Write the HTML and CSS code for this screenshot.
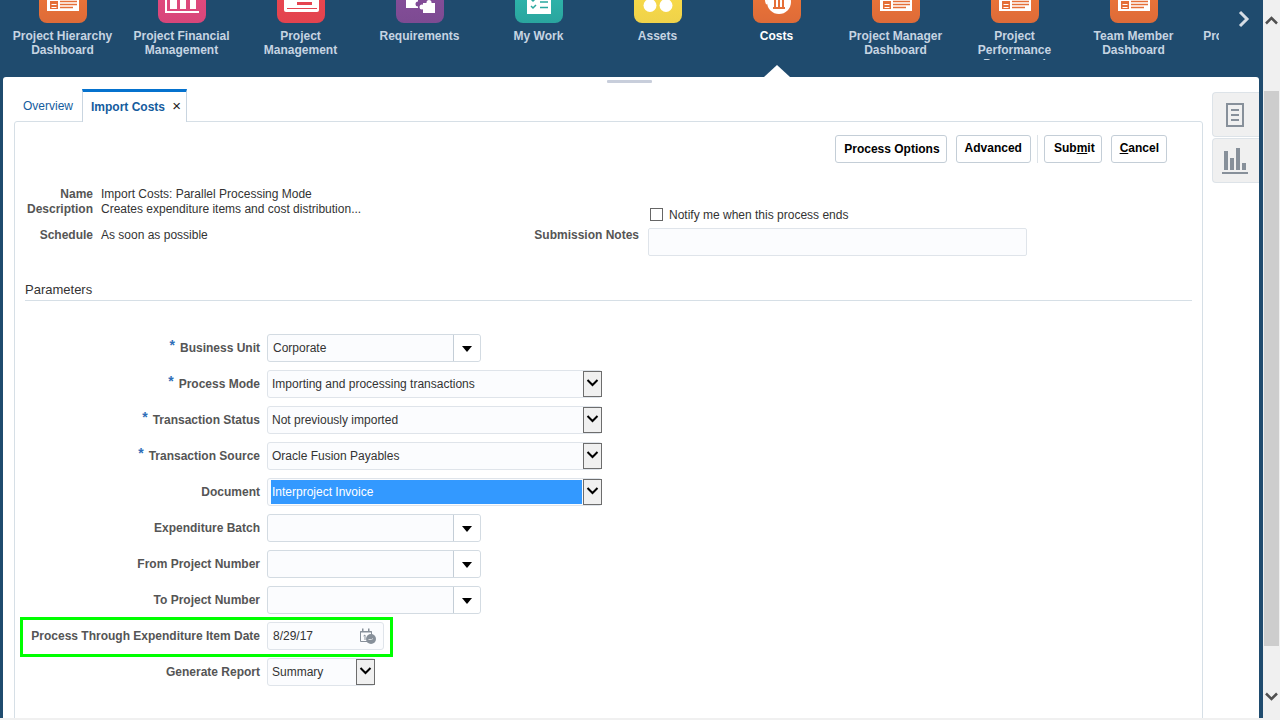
FILE: index.html
```html
<!DOCTYPE html>
<html lang="en">
<head>
    <meta charset="UTF-8">
    <title>Import Costs</title>
    <link rel="stylesheet" href="styles.css">
</head>
<body>
    <div class="page">
        <div class="nav">
            <div class="nav-strip">
                <div class="nav-item">
                    <div class="nav-icon orange">
                        <svg width="48" height="48" viewBox="0 0 48 48"><rect x="8" y="10" width="32" height="26" fill="#fff"/><rect x="11" y="26" width="8" height="8" fill="#e56f38"/><path d="M12.500 29.500h5M12.500 32.500h5" stroke="#fff"/><path d="M21 26.500h17M21 29.500h17M21 32.500h13" stroke="#e56f38" stroke-width="1.500"/></svg>
                    </div>
                    <div class="nav-label">Project Hierarchy Dashboard</div>
                </div>
                <div class="nav-item">
                    <div class="nav-icon pink">
                        <svg width="48" height="48" viewBox="0 0 48 48"><path d="M8 10v27h33" fill="none" stroke="#fff" stroke-width="2"/><rect x="12" y="10" width="7" height="24" fill="#fff"/><rect x="22" y="10" width="6" height="24" fill="#fff"/><rect x="32" y="10" width="6" height="24" fill="#fff"/></svg>
                    </div>
                    <div class="nav-label">Project Financial Management</div>
                </div>
                <div class="nav-item">
                    <div class="nav-icon red">
                        <svg width="48" height="48" viewBox="0 0 48 48"><rect x="7" y="10" width="35" height="27" rx="2" fill="#fff"/><rect x="20" y="27" width="15" height="3" fill="#e5434f"/><rect x="10" y="33" width="30" height="1" fill="#e5434f"/></svg>
                    </div>
                    <div class="nav-label">Project Management</div>
                </div>
                <div class="nav-item">
                    <div class="nav-icon purple">
                        <svg width="48" height="48" viewBox="0 0 48 48"><rect x="10" y="10" width="12" height="23" fill="#fff"/><circle cx="22" cy="29" r="2.500" fill="#7f4a96"/><rect x="27" y="28" width="12" height="10" fill="#fff"/><circle cx="26" cy="32" r="2.500" fill="#fff"/><circle cx="33" cy="27.500" r="2.500" fill="#fff"/></svg>
                    </div>
                    <div class="nav-label">Requirements</div>
                </div>
                <div class="nav-item">
                    <div class="nav-icon teal">
                        <svg width="48" height="48" viewBox="0 0 48 48"><rect x="12" y="10" width="24" height="29" fill="#fff"/><path d="M16 24l2 2 3-3M16 31l2 2 3-3" fill="none" stroke="#2aa89f" stroke-width="1.500"/><path d="M25 27h8M25 32.500h8" stroke="#2aa89f" stroke-width="1.500"/></svg>
                    </div>
                    <div class="nav-label">My Work</div>
                </div>
                <div class="nav-item">
                    <div class="nav-icon yellow">
                        <svg width="48" height="48" viewBox="0 0 48 48"><circle cx="16" cy="30.500" r="6.500" fill="#fff"/><circle cx="32" cy="30.500" r="6.500" fill="#fff"/></svg>
                    </div>
                    <div class="nav-label">Assets</div>
                </div>
                <div class="nav-item active">
                    <div class="nav-icon orange">
                        <svg width="48" height="48" viewBox="0 0 48 48"><circle cx="26" cy="27" r="12" fill="#fff"/><path d="M13 22a12 12 0 0 0 1 7" fill="none" stroke="#fff" stroke-width="2"/><path d="M20 32h12v2H20zM21 25h2v7h-2zM25 25h2v7h-2zM29 25h2v7h-2z" fill="#e56f38"/></svg>
                    </div>
                    <div class="nav-label">Costs</div>
                </div>
                <div class="nav-item">
                    <div class="nav-icon orange">
                        <svg width="48" height="48" viewBox="0 0 48 48"><rect x="8" y="10" width="32" height="26" fill="#fff"/><rect x="11" y="26" width="8" height="8" fill="#e56f38"/><path d="M12.500 29.500h5M12.500 32.500h5" stroke="#fff"/><path d="M21 26.500h17M21 29.500h17M21 32.500h13" stroke="#e56f38" stroke-width="1.500"/></svg>
                    </div>
                    <div class="nav-label">Project Manager Dashboard</div>
                </div>
                <div class="nav-item">
                    <div class="nav-icon orange">
                        <svg width="48" height="48" viewBox="0 0 48 48"><rect x="8" y="10" width="32" height="26" fill="#fff"/><rect x="11" y="26" width="8" height="8" fill="#e56f38"/><path d="M12.500 29.500h5M12.500 32.500h5" stroke="#fff"/><path d="M21 26.500h17M21 29.500h17M21 32.500h13" stroke="#e56f38" stroke-width="1.500"/></svg>
                    </div>
                    <div class="nav-label">Project Performance Dashboard</div>
                </div>
                <div class="nav-item">
                    <div class="nav-icon orange">
                        <svg width="48" height="48" viewBox="0 0 48 48"><rect x="8" y="10" width="32" height="26" fill="#fff"/><rect x="11" y="26" width="8" height="8" fill="#e56f38"/><path d="M12.500 29.500h5M12.500 32.500h5" stroke="#fff"/><path d="M21 26.500h17M21 29.500h17M21 32.500h13" stroke="#e56f38" stroke-width="1.500"/></svg>
                    </div>
                    <div class="nav-label">Team Member Dashboard</div>
                </div>
                <div class="nav-item">
                    <div class="nav-icon orange"></div>
                    <div class="nav-label">Project Resource Dashboard</div>
                </div>
            </div>
            <div class="nav-next">
                <svg width="14" height="18" viewBox="0 0 14 18"><path d="M3 2l7 7-7 7" fill="none" stroke="#d5dde5" stroke-width="3"/></svg>
            </div>
        </div>

        <div class="panel">
            <div class="handle"></div>
            <div class="work">
                <div class="main-col">
                    <div class="tabs">
                        <div class="tab">Overview</div>
                        <div class="tab current">Import Costs <span class="tab-close">&times;</span></div>
                    </div>
                    <div class="box">
                        <div class="toolbar">
                            <div class="btn raised">Process Options</div>
                            <div class="btn">Advanced</div>
                            <div class="sep"></div>
                            <div class="btn submit">Sub<u>m</u>it</div>
                            <div class="btn cancel"><u>C</u>ancel</div>
                        </div>

                        <div class="summary">
                            <div class="summary-left">
                                <div class="info-label">Name</div>
                                <div class="info-value">Import Costs: Parallel Processing Mode</div>
                                <div class="info-label">Description</div>
                                <div class="info-value">Creates expenditure items and cost distribution...</div>
                                <div class="info-label schedule">Schedule</div>
                                <div class="info-value schedule">As soon as possible</div>
                            </div>
                            <div class="summary-right">
                                <div></div>
                                <div class="notify"><span class="checkbox"></span>Notify me when this process ends</div>
                                <div class="info-label notes-label">Submission Notes</div>
                                <div class="notes"></div>
                            </div>
                        </div>

                        <div class="section-title">Parameters</div>

                        <div class="params">
                            <div class="row">
                                <div class="row-label"><span class="req">*</span>Business Unit</div>
                                <div class="combo"><div class="value">Corporate</div><div class="combo-btn"></div></div>
                            </div>
                            <div class="row">
                                <div class="row-label"><span class="req">*</span>Process Mode</div>
                                <div class="select"><div class="value">Importing and processing transactions</div><div class="select-btn"><svg width="13" height="8" viewBox="0 0 13 8"><path d="M1.500 1l5 5 5-5" fill="none" stroke="#000" stroke-width="2"/></svg></div></div>
                            </div>
                            <div class="row">
                                <div class="row-label"><span class="req">*</span>Transaction Status</div>
                                <div class="select"><div class="value">Not previously imported</div><div class="select-btn"><svg width="13" height="8" viewBox="0 0 13 8"><path d="M1.500 1l5 5 5-5" fill="none" stroke="#000" stroke-width="2"/></svg></div></div>
                            </div>
                            <div class="row">
                                <div class="row-label"><span class="req">*</span>Transaction Source</div>
                                <div class="select"><div class="value">Oracle Fusion Payables</div><div class="select-btn"><svg width="13" height="8" viewBox="0 0 13 8"><path d="M1.500 1l5 5 5-5" fill="none" stroke="#000" stroke-width="2"/></svg></div></div>
                            </div>
                            <div class="row">
                                <div class="row-label">Document</div>
                                <div class="select"><div class="value selected">Interproject Invoice</div><div class="select-btn"><svg width="13" height="8" viewBox="0 0 13 8"><path d="M1.500 1l5 5 5-5" fill="none" stroke="#000" stroke-width="2"/></svg></div></div>
                            </div>
                            <div class="row">
                                <div class="row-label">Expenditure Batch</div>
                                <div class="combo"><div class="value"></div><div class="combo-btn"></div></div>
                            </div>
                            <div class="row">
                                <div class="row-label">From Project Number</div>
                                <div class="combo"><div class="value"></div><div class="combo-btn"></div></div>
                            </div>
                            <div class="row">
                                <div class="row-label">To Project Number</div>
                                <div class="combo"><div class="value"></div><div class="combo-btn"></div></div>
                            </div>
                            <div class="row">
                                <div class="highlight"></div>
                                <div class="row-label">Process Through Expenditure Item Date</div>
                                <div class="date">
                                    <div class="value">8/29/17</div>
                                    <svg width="17" height="17" viewBox="0 0 17 17"><path d="M0.500 3.500h11v10h-11z" fill="none" stroke="#87909a"/><path d="M0.500 3h11v1.500h-11zM2 0.500h1.500v3H2zM8 0.500h1.500v3H8z" fill="#87909a"/><path d="M3.500 8l1.500-1v5" fill="none" stroke="#87909a"/><circle cx="11" cy="11" r="5" fill="#87909a"/><path d="M8.500 11.500h3l1.500-1" fill="none" stroke="#d8dce0"/></svg>
                                </div>
                            </div>
                            <div class="row">
                                <div class="row-label">Generate Report</div>
                                <div class="select short"><div class="value">Summary</div><div class="select-btn"><svg width="13" height="8" viewBox="0 0 13 8"><path d="M1.500 1l5 5 5-5" fill="none" stroke="#000" stroke-width="2"/></svg></div></div>
                            </div>
                        </div>
                    </div>
                </div>
                <div class="side">
                    <div class="side-tab">
                        <svg width="18" height="24" viewBox="0 0 18 24"><rect x="1" y="1" width="16" height="22" fill="none" stroke="#87909a" stroke-width="2"/><path d="M5 7h8M5 12h8M5 17h8" stroke="#87909a" stroke-width="2"/></svg>
                    </div>
                    <div class="side-tab">
                        <svg width="26" height="26" viewBox="0 0 26 26"><path d="M2 3h4v19H2zM8 10h4v12H8zM14 0h4v22h-4zM20 15h4v7h-4zM0 24h26v2H0z" fill="#87909a"/></svg>
                    </div>
                </div>
            </div>
        </div>
    </div>

    <div class="scrollbar">
        <svg width="13" height="9" viewBox="0 0 13 9"><path d="M1 7.500l5.500-5.500 5.500 5.500" fill="none" stroke="#505050" stroke-width="2.500"/></svg>
        <div class="thumb"></div>
        <svg width="13" height="9" viewBox="0 0 13 9"><path d="M1 1.500l5.500 5.500 5.500-5.500" fill="none" stroke="#505050" stroke-width="2.500"/></svg>
    </div>
</body>
</html>
```

FILE: styles.css
```css
body {
    font-family: "Liberation Sans", Arial, sans-serif;
    font-size: 12px;
    margin: 0;
    padding: 0;
    height: 720px;
    overflow: hidden;
    display: flex;
    background-color: #f0f0f0;
    color: #333;
}
.page {
    width: 1263px;
    height: 718px;
    display: flex;
    flex-direction: column;
    background-color: #1f4b6e;
}

/* top springboard */
.nav {
    height: 77px;
    display: flex;
    flex: none;
}
.nav-strip {
    width: 1216px;
    margin-left: 3px;
    display: flex;
    overflow: hidden;
}
.nav-item {
    flex: 0 0 119px;
    height: 77px;
    position: relative;
}
.nav-icon {
    width: 48px;
    height: 48px;
    margin: -25px auto 0;
    border-radius: 8px;
}
.nav-icon svg {
    display: block;
}
.orange { background: linear-gradient(#f47a38, #de6b38); }
.pink { background: linear-gradient(#e84c80, #d7467a); }
.red { background: linear-gradient(#ee4850, #e2434f); }
.purple { background: linear-gradient(#8a4f9e, #7d4b92); }
.teal { background: linear-gradient(#30c0b4, #2aa59e); }
.yellow { background: linear-gradient(#ffe047, #efd24a); }
.nav-label {
    height: 31px;
    margin-top: 6px;
    padding: 0 8px;
    overflow: hidden;
    font-weight: bold;
    line-height: 14px;
    text-align: center;
    color: #c6d4e2;
}
.nav-item.active .nav-label {
    color: #fff;
}
.nav-item.active::after {
    content: "";
    position: absolute;
    left: 47px;
    bottom: 0;
    border-left: 13px solid transparent;
    border-right: 13px solid transparent;
    border-bottom: 12px solid #fff;
}
.nav-next {
    flex: 1;
    padding: 10px 0 0 18px;
}

/* main panel */
.panel {
    height: 641px;
    margin: 0 4px 0 3px;
    background: #fff;
    border-radius: 3px 3px 0 0;
    overflow: hidden;
}
.handle {
    width: 45px;
    height: 3px;
    margin: 3px 0 0 604px;
    border-radius: 1px;
    background: #c8cedb;
}
.work {
    display: flex;
    margin-top: 6px;
}
.main-col {
    width: 1189px;
    margin-left: 11px;
}
.tabs {
    height: 32px;
    display: flex;
    padding-left: 1px;
}
.tab {
    padding: 3px 9px 0 8px;
    line-height: 29px;
    color: #145c9e;
}
.tab.current {
    width: 105px;
    box-sizing: border-box;
    padding: 0 0 0 8px;
    line-height: 28px;
    border-top: 3px solid #0572ce;
    border-left: 1px solid #c9d5e0;
    border-right: 1px solid #c9d5e0;
    background: #fff;
    font-weight: bold;
    position: relative;
    height: 33px;
}
.tab-close {
    font-weight: normal;
    font-size: 15px;
    color: #222;
    margin-left: 4px;
}
.box {
    height: 620px;
    box-sizing: border-box;
    border: 1px solid #d6dfe6;
    border-radius: 3px;
    padding-top: 13px;
}
.toolbar {
    display: flex;
    justify-content: flex-end;
    align-items: center;
    padding-right: 35px;
    height: 28px;
}
.btn {
    height: 28px;
    box-sizing: border-box;
    padding: 0 8px;
    margin-left: 9px;
    border: 1px solid #c4ced7;
    border-radius: 3px;
    font-weight: bold;
    line-height: 24px;
    color: #000;
    background: #fff;
}
.btn.raised {
    padding-right: 6px;
    line-height: 26px;
}
.btn.submit {
    padding: 0 6px 0 9px;
}
.btn.cancel {
    padding: 0 7px 0 8px;
}
.sep {
    width: 1px;
    height: 28px;
    margin: 0 -3px 0 6px;
    background: #dde3e8;
}

/* process summary */
.summary {
    display: flex;
    margin-top: 24px;
}
.summary-left {
    width: 500px;
    display: grid;
    grid-template-columns: 78px 1fr;
    grid-auto-rows: min-content;
    column-gap: 8px;
    line-height: 15px;
}
.info-label {
    font-weight: bold;
    text-align: right;
    color: #555;
}
.schedule {
    margin-top: 11px;
}
.summary-right {
    display: grid;
    grid-template-columns: 124px 379px;
    column-gap: 9px;
    padding-top: 21px;
    line-height: 15px;
}
.notify {
    display: flex;
    align-items: center;
    height: 15px;
    margin-left: 2px;
}
.checkbox {
    width: 11px;
    height: 11px;
    margin-right: 6px;
    align-self: flex-start;
    border: 1px solid #666;
    background: #fff;
}
.notes-label {
    margin-top: 5px;
}
.notes {
    height: 28px;
    margin-top: 5px;
    box-sizing: border-box;
    border: 1px solid #dfe4ea;
    border-radius: 2px;
    background: #fbfcfe;
}
.section-title {
    width: 1167px;
    height: 20px;
    margin: 24px 0 0 10px;
    font-size: 13px;
    line-height: 19px;
    border-bottom: 1px solid #d6dfe6;
}

/* parameters form */
.params {
    margin: 33px 0 0 10px;
}
.row {
    display: flex;
    align-items: center;
    height: 28px;
    margin-bottom: 8px;
    position: relative;
}
.row-label {
    width: 235px;
    margin-right: 7px;
    font-weight: bold;
    text-align: right;
    color: #555;
    white-space: nowrap;
}
.req {
    color: #2f6fb8;
    font-size: 14px;
    line-height: 0;
    position: relative;
    top: -2px;
    margin-right: 5px;
}
.combo, .select, .date {
    height: 28px;
    box-sizing: border-box;
    display: flex;
    border: 1px solid #dfe4ea;
    border-radius: 3px;
    background: #fbfcfe;
    line-height: 26px;
}
.value {
    flex: 1;
    padding-left: 5px;
}
.combo {
    width: 214px;
    border-color: #d3dbe2;
}
.combo-btn {
    width: 26px;
    background: #fff;
    border-left: 1px solid #c4ced7;
    border-radius: 0 3px 3px 0;
    display: flex;
    align-items: center;
    justify-content: center;
}
.combo-btn::after {
    content: "";
    border-left: 5px solid transparent;
    border-right: 5px solid transparent;
    border-top: 6px solid #000;
    margin-top: 1px;
}
.select {
    width: 335px;
}
.select.short {
    width: 108px;
}
.select .value {
    padding-left: 4px;
}
.select-btn {
    width: 17px;
    height: 24px;
    margin-right: -1px;
    border: 1px solid #6d6d6d;
    background: #f0f0f0;
    display: flex;
    align-items: flex-start;
    justify-content: center;
}
.select-btn svg {
    margin-top: 7px;
}
.select .value.selected {
    margin: 1px 1px 1px 3px;
    padding-left: 1px;
    line-height: 24px;
    background: #3399ff;
    color: #fff;
}
.date {
    width: 117px;
    align-items: center;
    padding-right: 6px;
}
.highlight {
    position: absolute;
    left: -5px;
    top: -5px;
    width: 367px;
    height: 34px;
    border: 3px solid #00ff00;
}

/* right rail */
.side {
    width: 47px;
    margin: 3px 0 0 9px;
}
.side-tab {
    height: 45px;
    margin-bottom: 1px;
    padding-right: 2px;
    box-sizing: border-box;
    display: flex;
    align-items: center;
    justify-content: center;
    background: #f0f0f0;
    border: 1px solid #dde3e8;
    border-right: none;
    border-radius: 4px 0 0 4px;
}

/* browser scrollbar */
.scrollbar {
    width: 17px;
    height: 720px;
    display: flex;
    flex-direction: column;
    align-items: center;
    background: #f0f0f0;
}
.scrollbar svg {
    flex: none;
    margin-top: 16px;
}
.thumb {
    width: 15px;
    height: 555px;
    margin-top: 66px;
    background: #cdcdcd;
}
.scrollbar .thumb + svg {
    margin-top: 46px;
}
```
